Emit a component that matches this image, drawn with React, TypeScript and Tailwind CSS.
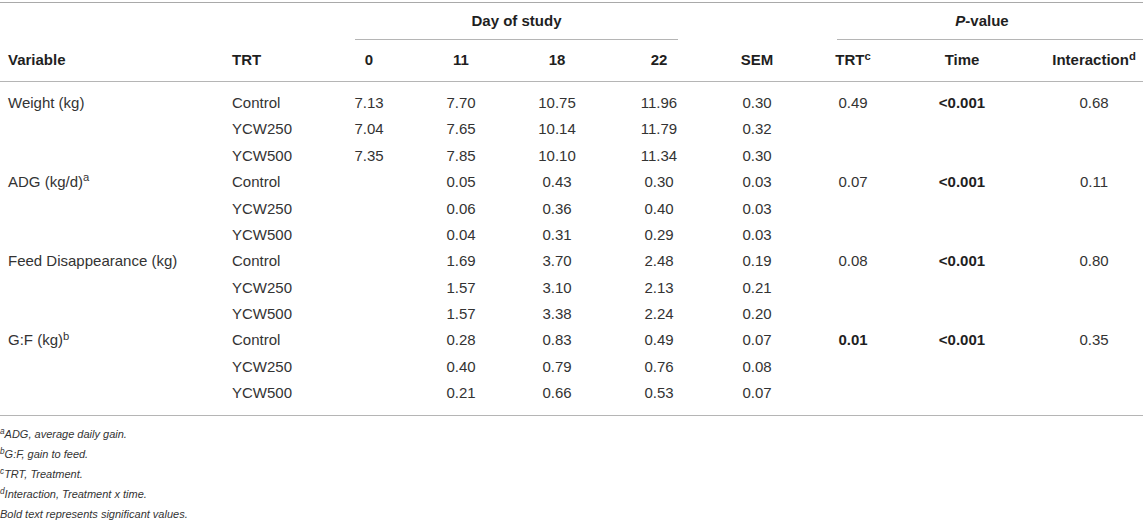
import React from "react";

type Row = {
  variable?: React.ReactNode;
  trt: string;
  days: string[];
  sem: string;
  p?: { v: string; bold?: boolean }[];
};

const rows: Row[] = [
  {
    variable: "Weight (kg)",
    trt: "Control",
    days: ["7.13", "7.70", "10.75", "11.96"],
    sem: "0.30",
    p: [{ v: "0.49" }, { v: "<0.001", bold: true }, { v: "0.68" }],
  },
  { trt: "YCW250", days: ["7.04", "7.65", "10.14", "11.79"], sem: "0.32" },
  { trt: "YCW500", days: ["7.35", "7.85", "10.10", "11.34"], sem: "0.30" },
  {
    variable: (
      <>
        ADG (kg/d)<sup>a</sup>
      </>
    ),
    trt: "Control",
    days: ["", "0.05", "0.43", "0.30"],
    sem: "0.03",
    p: [{ v: "0.07" }, { v: "<0.001", bold: true }, { v: "0.11" }],
  },
  { trt: "YCW250", days: ["", "0.06", "0.36", "0.40"], sem: "0.03" },
  { trt: "YCW500", days: ["", "0.04", "0.31", "0.29"], sem: "0.03" },
  {
    variable: "Feed Disappearance (kg)",
    trt: "Control",
    days: ["", "1.69", "3.70", "2.48"],
    sem: "0.19",
    p: [{ v: "0.08" }, { v: "<0.001", bold: true }, { v: "0.80" }],
  },
  { trt: "YCW250", days: ["", "1.57", "3.10", "2.13"], sem: "0.21" },
  { trt: "YCW500", days: ["", "1.57", "3.38", "2.24"], sem: "0.20" },
  {
    variable: (
      <>
        G:F (kg)<sup>b</sup>
      </>
    ),
    trt: "Control",
    days: ["", "0.28", "0.83", "0.49"],
    sem: "0.07",
    p: [{ v: "0.01", bold: true }, { v: "<0.001", bold: true }, { v: "0.35" }],
  },
  { trt: "YCW250", days: ["", "0.40", "0.79", "0.76"], sem: "0.08" },
  { trt: "YCW500", days: ["", "0.21", "0.66", "0.53"], sem: "0.07" },
];

const cols =
  "grid grid-cols-[225px_100px_88px_96px_96px_108px_88px_104px_114px_124px]";

const notes: [string, string][] = [
  ["a", "ADG, average daily gain."],
  ["b", "G:F, gain to feed."],
  ["c", "TRT, Treatment."],
  ["d", "Interaction, Treatment x time."],
];

export default function App() {
  return (
    <div className="w-[1143px] h-[523px] bg-white pt-[2px] font-['Liberation_Sans',Arial,sans-serif] text-[15px] text-[#333] overflow-hidden">
      <div className="border-t border-[#a9a9a9]" />

      {/* group header */}
      <div className={`${cols} h-[37px]`}>
        <div className="col-start-3 col-span-4 ml-[30px] mr-[35px] border-b border-[#b5b5b5] flex items-center justify-center font-bold text-[#1f1f1f]">
          Day of study
        </div>
        <div className="col-start-8 col-span-3 ml-[36px] border-b border-[#b5b5b5] flex items-center justify-center pr-[16px] font-bold text-[#1f1f1f]">
          <span>
            <i>P</i>-value
          </span>
        </div>
      </div>

      {/* column header */}
      <div className={`${cols} h-[42px] border-b border-[#b5b5b5] items-center font-bold text-[#1f1f1f]`}>
        <div className="pl-2">Variable</div>
        <div className="pl-[7px]">TRT</div>
        <div className="text-center">0</div>
        <div className="text-center">11</div>
        <div className="text-center">18</div>
        <div className="text-center">22</div>
        <div className="text-center">SEM</div>
        <div className="text-center">
          TRT<sup>c</sup>
        </div>
        <div className="text-center">Time</div>
        <div className="text-center pl-[26px]">
          Interaction<sup>d</sup>
        </div>
      </div>

      {/* body */}
      <div className="pt-[8px] pb-[8px] border-b border-[#b5b5b5]">
        {rows.map((r, i) => (
          <div key={i} className={`${cols} h-[26.4px] items-center`}>
            <div className="pl-2 whitespace-nowrap">{r.variable}</div>
            <div className="pl-[7px]">{r.trt}</div>
            {r.days.map((d, j) => (
              <div key={j} className="text-center">
                {d}
              </div>
            ))}
            <div className="text-center">{r.sem}</div>
            {r.p ? (
              r.p.map((p, j) => (
                <div
                  key={j}
                  className={`text-center ${j === 2 ? "pl-[26px]" : ""} ${p.bold ? "font-bold text-[#1f1f1f]" : ""}`}
                >
                  {p.v}
                </div>
              ))
            ) : (
              <>
                <div />
                <div />
                <div />
              </>
            )}
          </div>
        ))}
      </div>

      {/* footnotes */}
      <div className="pt-[8px] italic text-[11px] leading-[20px]">
        {notes.map(([s, t]) => (
          <div key={s}>
            <sup>{s}</sup>
            {t}
          </div>
        ))}
        <div>Bold text represents significant values.</div>
      </div>
    </div>
  );
}
